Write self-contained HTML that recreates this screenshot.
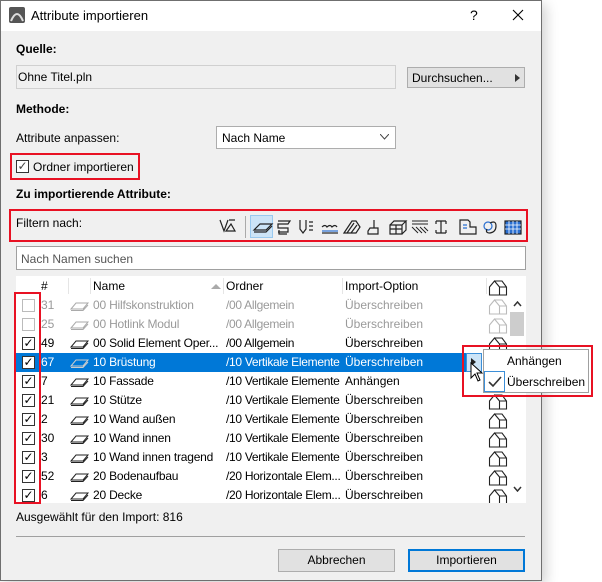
<!DOCTYPE html>
<html><head><meta charset="utf-8"><style>
*{box-sizing:border-box;margin:0;padding:0}
body{width:602px;height:582px;background:#fff;font-family:"Liberation Sans",sans-serif;font-size:12px;color:#000;position:relative;overflow:hidden}
.a{position:absolute;white-space:nowrap}
.dlg{position:absolute;left:0;top:0;width:542px;height:581px;background:#f0f0f0;border:1px solid #6f6f6f;box-shadow:4px 4px 12px rgba(0,0,0,.18)}
.b{font-weight:bold}
.red{position:absolute;border:2px solid #e81123}
.row{position:absolute;left:16px;width:470px;height:19px;line-height:19px;overflow:hidden}
.row span{position:absolute;top:0;overflow:hidden}
.cb{position:absolute;width:13px;height:13px;border:1px solid #333;background:#fff;font-size:12px;line-height:11px;text-align:center}
</style></head><body>
<div class="dlg"></div>
<div class="a" style="left:1px;top:1px;width:540px;height:30px;background:#fff"></div>
<svg class="a" style="left:9px;top:7px" width="16" height="16"><rect width="16" height="16" rx="2" fill="#555"/><path d="M2 14 Q8 0 14 14" stroke="#ddd" stroke-width="2" fill="none"/></svg>
<div class="a" style="left:31px;top:8px;font-size:13px">Attribute importieren</div>
<div class="a" style="left:470px;top:7px;font-size:14px">?</div>
<svg class="a" style="left:512px;top:9px" width="12" height="12"><path d="M1 1L11 11M11 1L1 11" stroke="#000" stroke-width="1.1"/></svg>

<div class="a b" style="left:16px;top:42px">Quelle:</div>
<div class="a" style="left:16px;top:65px;width:380px;height:24px;border:1px solid #d0d0d0;background:#f0f0f0;padding:4px 0 0 1px">Ohne Titel.pln</div>
<div class="a" style="left:407px;top:67px;width:118px;height:21px;border:1px solid #adadad;background:#e1e1e1;padding:3px 0 0 4px">Durchsuchen...</div>
<svg class="a" style="left:515px;top:74px" width="5" height="8"><path d="M0 0L5 4L0 8Z" fill="#333"/></svg>

<div class="a b" style="left:16px;top:102px">Methode:</div>
<div class="a" style="left:16px;top:131px">Attribute anpassen:</div>
<div class="a" style="left:216px;top:126px;width:180px;height:23px;border:1px solid #adadad;background:#fff;padding:4px 0 0 5px">Nach Name</div>
<svg class="a" style="left:380px;top:134px" width="9" height="6"><path d="M0 0L4.5 5L9 0" stroke="#444" fill="none"/></svg>

<div class="red" style="left:10px;top:153px;width:130px;height:27px"></div>
<div class="cb" style="left:16px;top:160px;color:#444">✓</div>
<div class="a" style="left:33px;top:160px">Ordner importieren</div>
<div class="a b" style="left:16px;top:187px">Zu importierende Attribute:</div>

<div class="red" style="left:9px;top:209px;width:519px;height:33px"></div>
<div class="a" style="left:16px;top:216px">Filtern nach:</div>
<div class="a" style="left:245px;top:216px;width:1px;height:22px;background:#aaa"></div>
<div class="a" style="left:250px;top:215px;width:23px;height:23px;background:#cce4f7;border:1px solid #99c9ef"></div>
<svg class="a" style="left:216px;top:215px" width="310" height="24" fill="none" stroke="#222" stroke-width="1.2">
<path d="M4 5L8 16L12 5M10 16H19L15 9Z M13 5h6"/>
<path d="M38 15L44 9H56L50 15Z M38 17h12l6-6"/>
<path d="M62 6h12l-2 3h-10v4h10v4h-10M63 15v4h8"/>
<path d="M84 5v9l3 4l3-4V5 M93 7h4M93 11h4M93 15h4"/>
<path d="M106 12q3-3 5 0q3-3 5 0q3-3 5 0" /><path d="M106 16h16" stroke="#2a6fd1"/><path d="M106 18h16"/>
<path d="M128 18L136 6H140L144 12L140 18Z M131 18l7-10M135 18l6-8"/>
<path d="M158 5v8M154 13h8v6h-10v-3Z"/>
<path d="M174 10h12v9h-12Z M174 10l4-4h12l-4 4M186 19l4-4V6M174 14h12M180 10v9"/>
<path d="M196 6h16M196 9h16M196 12l6 6M200 12l6 6M204 12l6 6M208 12l4 4" stroke-width="1"/>
<path d="M220 6h10M220 18h10M225 6v12M220 6v3M230 6v3M220 18v-3M230 18v-3"/>
<path d="M244 5h8l2 2v5h6v7h-16Z" /><path d="M247 10h4M247 13h4" stroke="#2a6fd1"/>
<circle cx="272" cy="11" r="4" stroke="#2a6fd1"/><path d="M274 8q6-3 6 3q0 6-6 7q-5 0-3-4"/>
<rect x="289" y="6" width="16" height="13" fill="#2a6fd1" stroke="#222"/><path d="M289 10h16M289 14h16M293 6v13M297 6v13M301 6v13" stroke="#fff" stroke-width=".8"/>
</svg>

<div class="a" style="left:16px;top:246px;width:510px;height:24px;border:1px solid #a0a0a0;background:#fff;padding:5px 0 0 4px;color:#555">Nach Namen suchen</div>

<div class="a" style="left:16px;top:276px;width:510px;height:227px;background:#fff"></div>
<div class="a" style="left:16px;top:276px;width:492px;height:20px;line-height:20px">
<span class="a" style="left:25px">#</span><span class="a" style="left:77px">Name</span><span class="a" style="left:210px">Ordner</span><span class="a" style="left:329px">Import-Option</span>
<span class="a" style="left:52px;top:2px;width:1px;height:16px;background:#e5e5e5"></span><span class="a" style="left:74px;top:2px;width:1px;height:16px;background:#e5e5e5"></span><span class="a" style="left:207px;top:2px;width:1px;height:16px;background:#e5e5e5"></span><span class="a" style="left:326px;top:2px;width:1px;height:16px;background:#e5e5e5"></span><span class="a" style="left:470px;top:2px;width:1px;height:16px;background:#e5e5e5"></span>
<svg class="a" style="left:195px;top:7px" width="10" height="6"><path d="M0 6L5 1L10 6Z" fill="#aaa"/></svg>
</div>

<div class="a" style="left:16px;top:353px;width:450px;height:19px;background:#0078d7"></div>
<div class="a" style="left:466px;top:353px;width:16px;height:19px;background:#cce4f7;border:1px solid #3c8fd8"></div>
<svg class="a" style="left:471px;top:358px" width="5" height="8"><path d="M0 0L5 4L0 8Z" fill="#222"/></svg>

<div id="rows"></div>
<div class="a" style="left:488px;top:277px;width:20px;height:226px;overflow:hidden" id="houses"></div>
<div class="a" style="left:510px;top:312px;width:14px;height:24px;background:#cdcdcd"></div>
<svg class="a" style="left:513px;top:301px" width="9" height="6"><path d="M1 5L4.5 1L8 5" stroke="#333" stroke-width="1.5" fill="none"/></svg>
<svg class="a" style="left:513px;top:486px" width="9" height="6"><path d="M1 1L4.5 5L8 1" stroke="#333" stroke-width="1.5" fill="none"/></svg>

<div class="red" style="left:14px;top:292px;width:27px;height:212px"></div>

<div class="red" style="left:462px;top:345px;width:131px;height:52px"></div>
<div class="a" style="left:483px;top:349px;width:106px;height:44px;background:#fff;border:1px solid #a0a0a0"></div>
<div class="a" style="left:507px;top:354px">Anhängen</div>
<div class="a" style="left:484px;top:371px;width:21px;height:21px;border:1px solid #3c8fd8;background:#fff"></div>
<svg class="a" style="left:488px;top:376px" width="14" height="12"><path d="M1 6L5 10L13 1" stroke="#333" stroke-width="1.6" fill="none"/></svg>
<div class="a" style="left:507px;top:375px">Überschreiben</div>
<svg class="a" style="left:470px;top:362px" width="14" height="20"><path d="M1 1V16L5 12L8 19L10 18L7 11H12Z" fill="#fff" stroke="#000"/></svg>

<div class="a" style="left:16px;top:510px">Ausgewählt für den Import: 816</div>
<div class="a" style="left:16px;top:536px;width:509px;height:1px;background:#a0a0a0"></div>
<div class="a" style="left:278px;top:549px;width:117px;height:23px;border:1px solid #adadad;background:#e1e1e1;text-align:center;line-height:21px">Abbrechen</div>
<div class="a" style="left:408px;top:549px;width:117px;height:23px;border:2px solid #0078d7;background:#e1e1e1;text-align:center;line-height:19px">Importieren</div>

<script>
var d=[["31","00 Hilfskonstruktion","/00 Allgemein","Überschreiben",0],["25","00 Hotlink Modul","/00 Allgemein","Überschreiben",0],["49","00 Solid Element Oper...","/00 Allgemein","Überschreiben",1],["67","10 Brüstung","/10 Vertikale Elemente","Überschreiben",2],["7","10 Fassade","/10 Vertikale Elemente","Anhängen",1],["21","10 Stütze","/10 Vertikale Elemente","Überschreiben",1],["2","10 Wand außen","/10 Vertikale Elemente","Überschreiben",1],["30","10 Wand innen","/10 Vertikale Elemente","Überschreiben",1],["3","10 Wand innen tragend","/10 Vertikale Elemente","Überschreiben",1],["52","20 Bodenaufbau","/20 Horizontale Elem...","Überschreiben",1],["6","20 Decke","/20 Horizontale Elem...","Überschreiben",1]];
var h="",hs="";var hp='<path d="M1.5 18V10L6.5 4L11.5 10V18Z M6.5 4H14L18.5 10V18H11.5 M11.5 10H18.5"/>';
hs+='<svg style="position:absolute;left:0;top:0" width="20" height="20" fill="none" stroke="#222" stroke-width="1.1">'+hp+'</svg>';
d.forEach(function(r,i){var y=296+i*19,c=r[4]==0?"#9a9a9a":(r[4]==2?"#fff":"#000");var hh=i==10?17:19;
hs+='<svg style="position:absolute;left:0;top:'+(19+i*19)+'px" width="20" height="20" fill="none" stroke="'+(r[4]==0?"#bbb":"#222")+'" stroke-width="1.1">'+hp+'</svg>';
h+='<div class="row" style="top:'+y+'px;color:'+c+';height:'+hh+'px">'+
'<div class="cb" style="left:6px;top:3px;'+(r[4]==0?'border-color:#bbb':'')+';color:#000">'+(r[4]?'✓':'')+'</div>'+
'<span style="left:25px">'+r[0]+'</span>'+
'<svg style="position:absolute;left:54px;top:4px" width="20" height="11"><path d="M1 9L6 3H18L13 9Z M1 10.5h12l5-5.5" stroke="'+(r[4]==0?"#aaa":(r[4]==2?"#ccc":"#222"))+'" fill="none"/></svg>'+
'<span style="left:77px;width:128px;letter-spacing:-.2px">'+r[1]+'</span><span style="left:210px;width:117px;letter-spacing:-.3px">'+r[2]+'</span><span style="left:329px;width:140px">'+r[3]+'</span></div>';});
document.getElementById("rows").outerHTML=h;
document.getElementById("houses").innerHTML=hs;
</script>
</body></html>
